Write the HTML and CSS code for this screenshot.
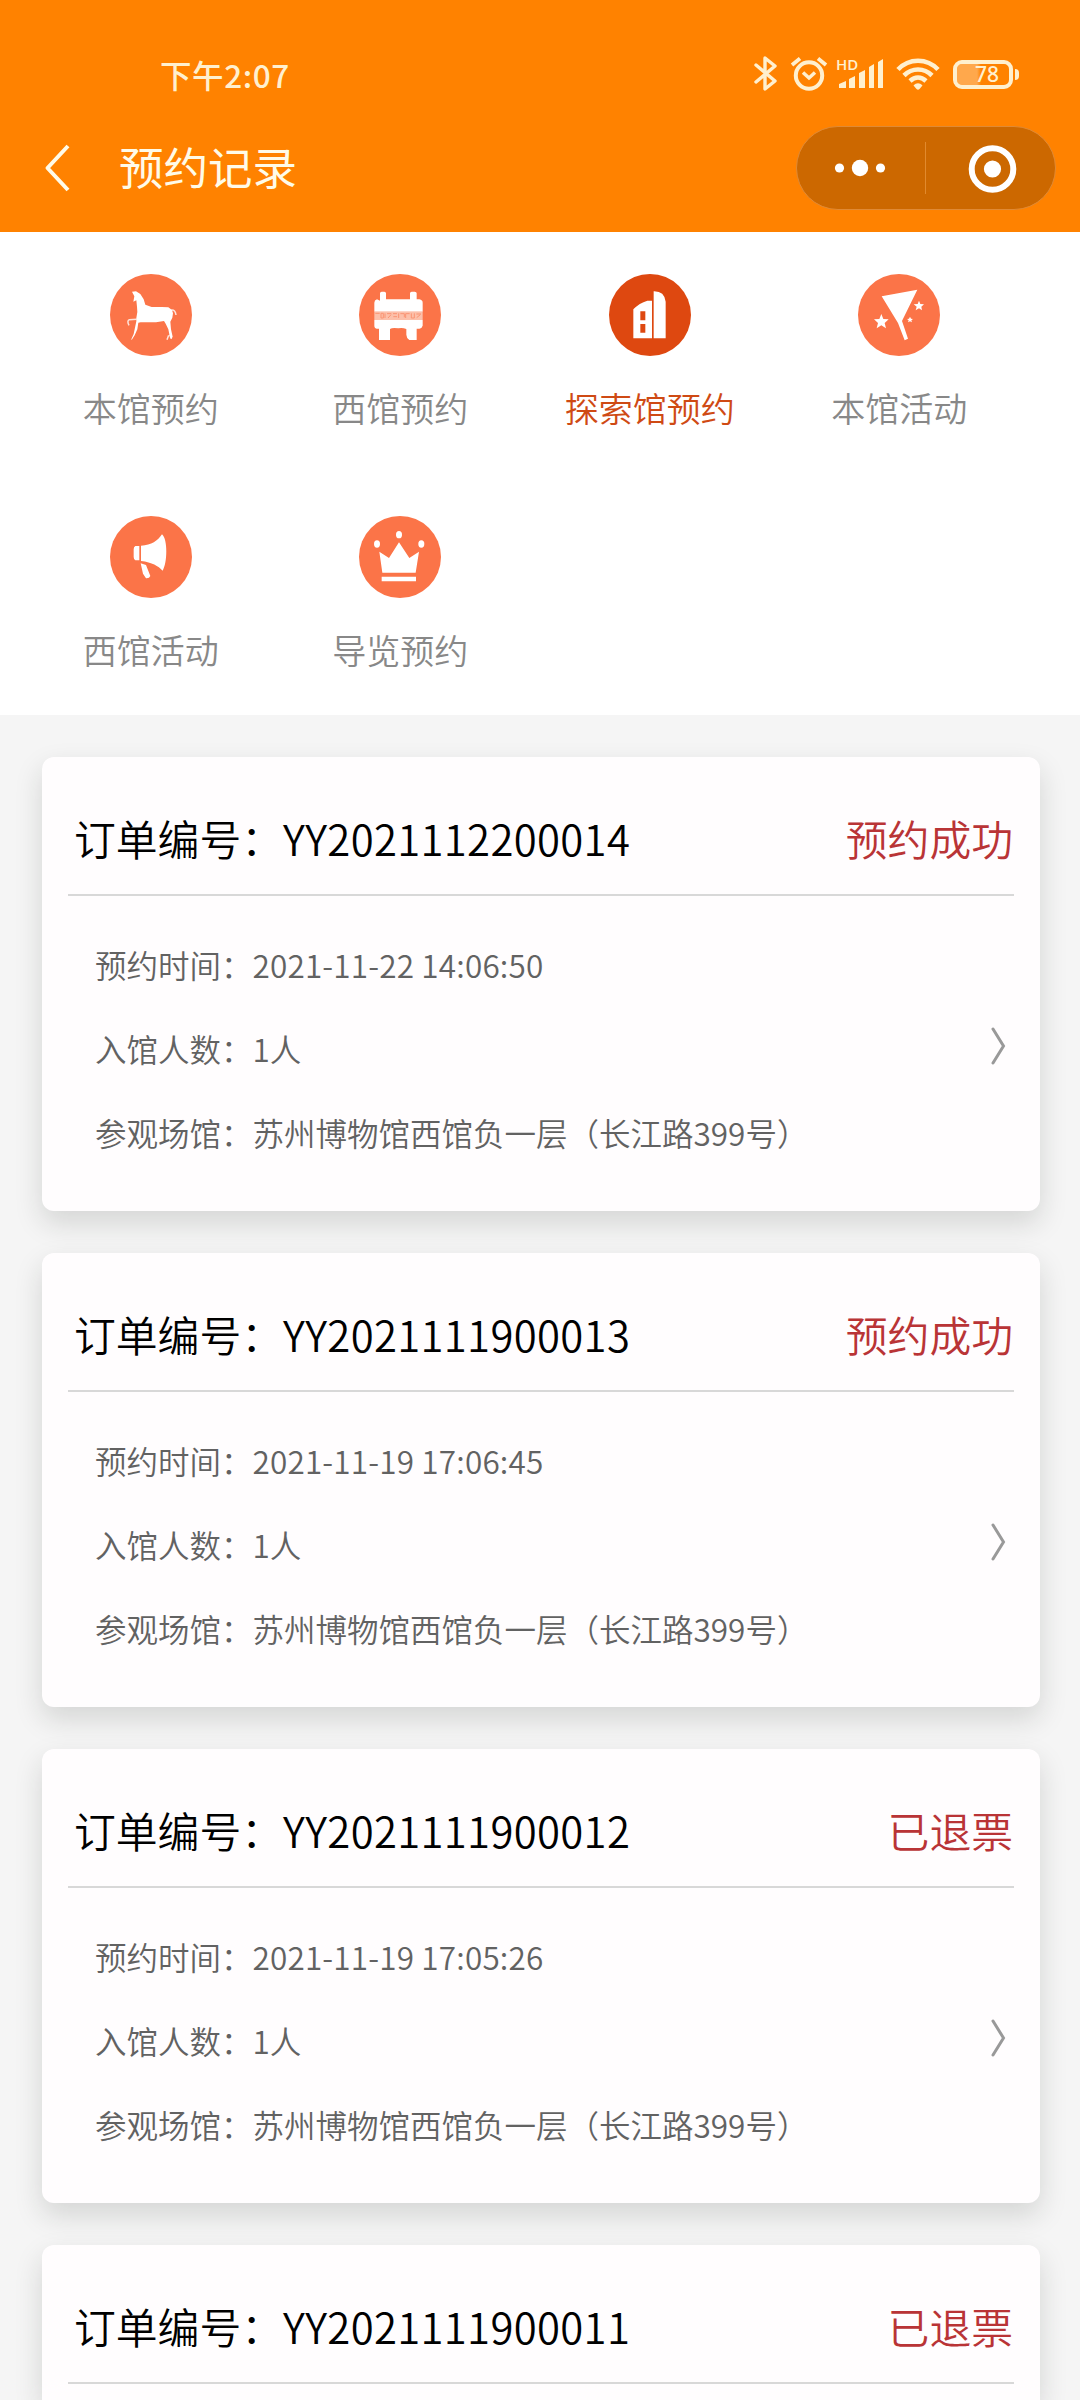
FILE: index.html
```
<!DOCTYPE html>
<html lang="zh-CN">
<head>
<meta charset="utf-8">
<title>预约记录</title>
<link rel="stylesheet" href="styles.css">
</head>
<body>
<header class="top">
  <div class="status">
    <span class="clock">下午2:07</span>
    <div class="indicators">
      <svg class="bt" width="24" height="38" viewBox="0 0 24 38" fill="none" stroke="currentColor" stroke-width="3.4" stroke-linejoin="round" stroke-linecap="round"><path d="M2 10l19 16-10 8V3l10 8L2 27"/></svg>
      <svg class="alarm" width="38" height="36" viewBox="0 0 38 36" fill="none" stroke="currentColor" stroke-width="4"><circle cx="19" cy="19.5" r="13.2"/><path d="M13 16.500l6 5.500 6-5.500" stroke-width="3.500"/><path d="M2 9l8-6.500M36 9l-8-6.500" stroke-width="3.800"/></svg>
      <div class="signal"><span class="hd">HD</span>
        <svg width="48" height="32" viewBox="0 0 48 32" fill="currentColor"><path d="M3 26l7-3v7H3zM13 21l6-3v12h-6zM23 15l6-3v18h-6zM33 9l5-3v24h-5zM42 4l5-3v29h-5z"/></svg></div>
      <svg class="wifi" width="44" height="34" viewBox="0 0 44 34" fill="none" stroke="currentColor" stroke-width="4.600"><path d="M2 12.500C13 .8 31 .8 42 12.500M8 18.500c8-8 20-8 28 0M14 24c5-4.500 11-4.500 16 0"/><path d="M17.500 28.500c3-3 6-3 9 0L23.500 32q-1.500 1.500-3 0z" fill="currentColor" stroke="none"/></svg>
      <div class="battery"><span class="level">78</span></div><i class="cap"></i>
    </div>
  </div>
  <div class="nav">
    <svg class="back" width="28" height="50" viewBox="0 0 28 50" fill="none" stroke="currentColor" stroke-width="4"><path d="M24 3L3.500 25 24 47" stroke-linejoin="round"/></svg>
    <h1>预约记录</h1>
    <div class="capsule">
      <svg width="128" height="82" viewBox="0 0 128 82" fill="#fff"><circle cx="42.500" cy="41" r="4.600"/><circle cx="63" cy="41" r="8.200"/><circle cx="83.500" cy="41" r="4.600"/></svg>
      <i class="split"></i>
      <svg width="128" height="82" viewBox="0 0 128 82"><circle cx="66.500" cy="42" r="20.800" fill="none" stroke="#fff" stroke-width="6"/><circle cx="66.500" cy="42" r="8.600" fill="#fff"/></svg>
    </div>
  </div>
</header>

<nav class="tabs">
  <a class="tab"><svg class="disc" viewBox="0 0 246 246"><path d="M66 53l12-1 13 8 10 16 5 16 19 7h30l20 1 11 8 3 10-2 13-6 12 2 23 5 22-4 8-5-10-4-20-8-17-5-8-24 4H92l-7 1-3 20-8 18-9 14-1-2 7-16 8-38 0-10 3-18-1-16-2-19-9 4 3-16z"/><path d="M184 108q12-2 14 15M176 184l-5 13M180 182l3 12M80 136q-14 0-22 1-8 4-1 17" fill="none" stroke="#fff" stroke-width="4.500" opacity=".8"/></svg><span>本馆预约</span></a>
  <a class="tab"><svg class="disc" viewBox="0 0 246 246"><path d="M63 80V58q0-5 5-5h8q5 0 5 5v18h72V58q0-5 5-5h9q6 0 6 5v18h8q10 2 10 10v27H46V86q0-8 8-10zM46 138h145v17q-2 8-10 9h-8v34h-22q-9-7-9-16v-17q-12-5-24-2-18-3-25 2v33H60v-34h-6q-8-1-8-9z"/><path class="band" d="M46 113h145v25H46z"/><path class="runes" d="M49 118h13M66 118h7v14h-7zM78 132v-14M84 119h13M87 132l9-10M102 119h12M103 128h11M119 118v14M124 119h12v11M140 132v-13h12M157 118v14h9v-14M172 120h14M173 131l11-9"/></svg><span>西馆预约</span></a>
  <a class="tab active"><svg class="disc" viewBox="0 0 246 246"><path fill-rule="evenodd" d="M73 106q18-19 42-26l14 0v113H73zM94 112v27h15v-27zM94 150v26h15v-26zM134 52q32-1 36 31v110h-36z"/></svg><span>探索馆预约</span></a>
  <a class="tab"><svg class="disc" viewBox="0 0 246 246"><path d="M71 67l107-20-46 94 18 53-10 5-20-52z"/><path d="M70 120l6 15 16 1-12 11 4 16-14-9-14 9 4-16-12-11 16-1zM183 80l4 10 11 1-8 7 2 11-9-6-10 6 3-11-9-7 12-1zM156 128l3 6 6 1-5 4 2 6-6-3-6 3 2-6-5-4 6-1z"/></svg><span>本馆活动</span></a>
  <a class="tab"><svg class="disc" viewBox="0 0 246 246"><path d="M76 90h12v43H76q-5-3-5-10v-23q0-8 5-10zM93 89c32-2 50-14 63-34 18 15 16 87 2 109-14-14-31-25-65-29zM92 142l16 5 13 33q-3 8-13 7l-9-14z"/></svg><span>西馆活动</span></a>
  <a class="tab"><svg class="disc" viewBox="0 0 246 246"><path d="M61 107l29 19 30-47 31 47 29-19-10 63H70zM68 182h103v14H68z"/><ellipse cx="54" cy="84" rx="9" ry="11"/><ellipse cx="120" cy="56" rx="9" ry="11"/><ellipse cx="187" cy="84" rx="9" ry="11"/></svg><span>导览预约</span></a>
</nav>

<main class="orders">
  <article class="card">
    <div class="head"><span>订单编号：<span class="no">YY2021112200014</span></span><span class="state">预约成功</span></div>
    <div class="body"><div class="rows"><p>预约时间：<span class="date">2021-11-22 14:06:50</span></p><p>入馆人数：1人</p><p>参观场馆：苏州博物馆西馆负一层（长江路399号）</p></div>
      <svg class="go" viewBox="0 0 16 38"><path d="M2 2l10.500 17L2 36"/></svg></div>
  </article>
  <article class="card">
    <div class="head"><span>订单编号：<span class="no">YY2021111900013</span></span><span class="state">预约成功</span></div>
    <div class="body"><div class="rows"><p>预约时间：<span class="date">2021-11-19 17:06:45</span></p><p>入馆人数：1人</p><p>参观场馆：苏州博物馆西馆负一层（长江路399号）</p></div>
      <svg class="go" viewBox="0 0 16 38"><path d="M2 2l10.500 17L2 36"/></svg></div>
  </article>
  <article class="card">
    <div class="head"><span>订单编号：<span class="no">YY2021111900012</span></span><span class="state">已退票</span></div>
    <div class="body"><div class="rows"><p>预约时间：<span class="date">2021-11-19 17:05:26</span></p><p>入馆人数：1人</p><p>参观场馆：苏州博物馆西馆负一层（长江路399号）</p></div>
      <svg class="go" viewBox="0 0 16 38"><path d="M2 2l10.500 17L2 36"/></svg></div>
  </article>
  <article class="card cut">
    <div class="head"><span>订单编号：<span class="no">YY2021111900011</span></span><span class="state">已退票</span></div>
  </article>
</main>
</body>
</html>
```
FILE: styles.css
```
* { box-sizing: border-box; margin: 0; padding: 0; }
body {
  width: 1080px;
  height: 2400px;
  overflow: hidden;
  background: #f5f5f5;
  font-family: "Noto Sans CJK SC", sans-serif;
  font-weight: 350;
}
svg { display: block; flex: none; }

.top { height: 232px; background: #ff8200; color: #fffbe8; }
.status {
  height: 126px;
  padding: 49px 61px 0 160px;
  display: flex;
  justify-content: space-between;
  align-items: flex-start;
  color: #fff0cf;
}
.clock { font-size: 31.5px; line-height: 50px; font-weight: 500; letter-spacing: .6px; }
.indicators { display: flex; align-items: center; height: 50px; }
.alarm { margin-left: 12px; }
.signal { position: relative; margin-left: 8px; }
.hd { position: absolute; left: 0; top: -3px; font: 600 15px/18px "Open Sans", sans-serif; }
.wifi { margin-left: 12px; }
.battery {
  width: 60px;
  height: 29px;
  margin-left: 13px;
  border: 4px solid currentColor;
  border-radius: 9px;
  background: linear-gradient(90deg, #ffa84c 0 20px, transparent 24px);
  background-clip: padding-box;
  padding-left: 8px;
  text-align: center;
}
.level { display: block; font: 500 21px/20px "Noto Sans", sans-serif; }
.cap { width: 4px; height: 11px; margin-left: 2px; border-radius: 0 4px 4px 0; background: currentColor; }

.nav { display: flex; align-items: center; height: 84px; padding: 0 24px 0 44px; }
.nav h1 { flex: 1; margin: -4px 0 0 47px; font-size: 44.5px; line-height: 60px; font-weight: 400; }
.capsule {
  width: 260px;
  height: 84px;
  border: 1px solid #e08a35;
  border-radius: 42px;
  background: #cc6800;
  display: flex;
  align-items: center;
}
.split { width: 1px; height: 52px; background: #e18a2e; flex: none; }

.tabs {
  height: 483px;
  padding: 42px 57px 0 26px;
  background: #fff;
  display: grid;
  grid-template-columns: repeat(4, 249.5px);
  grid-auto-rows: 241.5px;
}
.tab { display: flex; flex-direction: column; align-items: center; gap: 27px; color: #888; font-size: 34px; line-height: 50px; }
.disc { width: 82px; height: 82px; border-radius: 50%; background: #fb7448; fill: #fff; }
.band { fill: #fcc0aa; }
.runes { fill: none; stroke: #fa9473; stroke-width: 3; }
.active { color: #cf4a14; }
.active .disc { background: #de4810; }

.orders { height: 1685px; padding: 42px 40px 0 42px; display: grid; gap: 42px; align-content: start; }
.card {
  height: 454px;
  padding: 0 26px;
  border-radius: 12px;
  background: #fffdfe;
  box-shadow: 0 12px 28px rgba(30, 35, 25, .15);
}
.cut { height: 155px; border-radius: 12px 12px 0 0; }
.head {
  height: 139px;
  padding: 49px 1px 0 6px;
  border-bottom: 2px solid #d8d8d8;
  display: flex;
  justify-content: space-between;
  font-size: 41.8px;
  line-height: 64px;
  color: #000;
}
.no { letter-spacing: .35px; }
.state { color: #b93436; font-size: 41.8px; }
.body { display: flex; justify-content: space-between; padding: 26px 7px 0 27px; }
.rows { font-size: 31.5px; line-height: 84px; color: #626262; }
.date { letter-spacing: .17px; }
.go { width: 16px; height: 38px; margin-top: 105px; fill: none; stroke: #999; stroke-width: 3; stroke-linecap: round; }
```
